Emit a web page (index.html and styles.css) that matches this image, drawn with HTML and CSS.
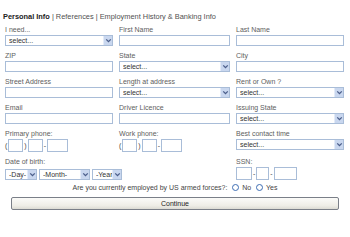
FILE: index.html
```html
<!DOCTYPE html>
<html lang="en">
<head>
    <meta charset="UTF-8">
    <title>Personal Info</title>
    <link rel="stylesheet" href="styles.css">
</head>
<body>
    <div class="tabs">
        <b>Personal Info</b> | References | Employment History &amp; Banking Info
    </div>

    <form class="grid">
        <!-- row 1 -->
        <div class="field">
            <label>I need...</label>
            <div class="select"><select><option>select...</option></select><span class="arrow"><svg viewBox="0 0 8 8"><path d="M2 3 L4 5 L6 3" /></svg></span></div>
        </div>
        <div class="field wide">
            <label>First Name</label>
            <input type="text">
        </div>
        <div class="field">
            <label>Last Name</label>
            <input type="text">
        </div>

        <!-- row 2 -->
        <div class="field">
            <label>ZIP</label>
            <input type="text">
        </div>
        <div class="field wide">
            <label>State</label>
            <div class="select"><select><option>select...</option></select><span class="arrow"><svg viewBox="0 0 8 8"><path d="M2 3 L4 5 L6 3" /></svg></span></div>
        </div>
        <div class="field">
            <label>City</label>
            <input type="text">
        </div>

        <!-- row 3 -->
        <div class="field">
            <label>Street Address</label>
            <input type="text">
        </div>
        <div class="field wide">
            <label>Length at address</label>
            <div class="select"><select><option>select...</option></select><span class="arrow"><svg viewBox="0 0 8 8"><path d="M2 3 L4 5 L6 3" /></svg></span></div>
        </div>
        <div class="field">
            <label>Rent or Own ?</label>
            <div class="select"><select><option>select...</option></select><span class="arrow"><svg viewBox="0 0 8 8"><path d="M2 3 L4 5 L6 3" /></svg></span></div>
        </div>

        <!-- row 4 -->
        <div class="field">
            <label>Email</label>
            <input type="text">
        </div>
        <div class="field wide">
            <label>Driver Licence</label>
            <input type="text">
        </div>
        <div class="field">
            <label>Issuing State</label>
            <div class="select"><select><option>select...</option></select><span class="arrow"><svg viewBox="0 0 8 8"><path d="M2 3 L4 5 L6 3" /></svg></span></div>
        </div>

        <!-- row 5 -->
        <div class="field">
            <label>Primary phone:</label>
            <div class="phone">(<input class="p1" type="text">)<input class="p2" type="text">-<input class="p3" type="text"></div>
        </div>
        <div class="field wide">
            <label>Work phone:</label>
            <div class="phone">(<input class="p1" type="text">)<input class="p2" type="text">-<input class="p3" type="text"></div>
        </div>
        <div class="field">
            <label>Best contact time</label>
            <div class="select"><select><option>select...</option></select><span class="arrow"><svg viewBox="0 0 8 8"><path d="M2 3 L4 5 L6 3" /></svg></span></div>
        </div>

        <!-- row 6 -->
        <div class="field dob">
            <label>Date of birth:</label>
            <div class="dates">
                <div class="select day"><select><option>-Day-</option></select><span class="arrow"><svg viewBox="0 0 8 8"><path d="M2 3 L4 5 L6 3" /></svg></span></div>
                <div class="select month"><select><option>-Month-</option></select><span class="arrow"><svg viewBox="0 0 8 8"><path d="M2 3 L4 5 L6 3" /></svg></span></div>
                <div class="select year"><select><option>-Year-</option></select><span class="arrow"><svg viewBox="0 0 8 8"><path d="M2 3 L4 5 L6 3" /></svg></span></div>
            </div>
        </div>
        <div class="field">
            <label>SSN:</label>
            <div class="phone ssn"><input class="s1" type="text">-<input class="s2" type="text">-<input class="s3" type="text"></div>
        </div>
    </form>

    <div class="question">
        Are you currently employed by US armed forces?:
        <input type="radio" name="armed"> No
        <input type="radio" name="armed"> Yes
    </div>

    <div class="actions">
        <button type="button">Continue</button>
    </div>
</body>
</html>
```

FILE: styles.css
```css
* {
    margin: 0;
    padding: 0;
    box-sizing: border-box;
}

body {
    font-family: 'Liberation Sans', Arial, sans-serif;
    font-size: 7px;
    color: #555;
    background: #fff;
}

.tabs {
    padding: 13px 0 0 3px;
    line-height: 8px;
    font-size: 7.4px;
    color: #505050;
}

.tabs b {
    color: #222;
}

.grid {
    display: grid;
    grid-template-columns: 114px 117px 108px;
    padding: 4px 0 0 5px;
    row-gap: 5px;
}

.field label {
    display: block;
    height: 10px;
    line-height: 9px;
    color: #5e5e5e;
}

.field > input[type="text"] {
    display: block;
    width: 108px;
    height: 11px;
    border: 1px solid #a9bdd8;
    background: #fff;
}

.field.wide > input[type="text"] {
    width: 111px;
}

.select {
    position: relative;
    width: 108px;
    height: 11px;
    border: 1px solid #a9bdd8;
    background: #fff;
}

.field.wide .select {
    width: 111px;
}

.select select {
    appearance: none;
    -webkit-appearance: none;
    border: none;
    outline: none;
    background: transparent;
    width: 100%;
    height: 9px;
    padding-left: 3px;
    font-family: inherit;
    font-size: 7px;
    line-height: 9px;
    color: #333;
}

/* arrow button over the select */
.select .arrow {
    position: absolute;
    top: 0;
    right: 0;
    width: 9px;
    height: 9px;
    background: #c9d7ef;
    border-left: 1px solid #e3ebf8;
}

.select .arrow svg {
    display: block;
    width: 9px;
    height: 9px;
}

.select .arrow path {
    fill: none;
    stroke: #4b5e8a;
    stroke-width: 1.2;
}

.phone {
    display: flex;
    align-items: center;
    gap: 1px;
    height: 13px;
    color: #444;
}

.phone input {
    height: 13px;
    border: 1px solid #a9bdd8;
    background: #fff;
}

.phone .p1 { width: 15px; }
.phone .p2 { width: 15px; }
.phone .p3 { width: 21px; }

.ssn .s1 { width: 16px; }
.ssn .s2 { width: 13px; }
.ssn .s3 { width: 23px; }

.dates {
    display: flex;
    gap: 2px;
    margin-top: 2px;
}

.field .select.day { width: 32px; }
.field .select.month { width: 51px; }
.field .select.year { width: 30px; }

.dob {
    grid-column: span 2;
}

.question {
    text-align: center;
    margin-top: 3px;
    line-height: 9px;
    color: #444;
}

.question input[type="radio"] {
    appearance: none;
    -webkit-appearance: none;
    width: 7px;
    height: 7px;
    border: 1px solid #3d6db3;
    border-radius: 50%;
    background: #fff;
    vertical-align: -1px;
    margin: 0 1px 0 3px;
}

.actions {
    padding: 5px 11px 0 11px;
}

.actions button {
    display: block;
    width: 100%;
    height: 13px;
    font-family: inherit;
    font-size: 7px;
    color: #222;
    background: linear-gradient(#fbfbf9, #eeede6 70%, #dcdbd3);
    border: 1px solid #7a7f88;
    border-radius: 2px;
}
```
